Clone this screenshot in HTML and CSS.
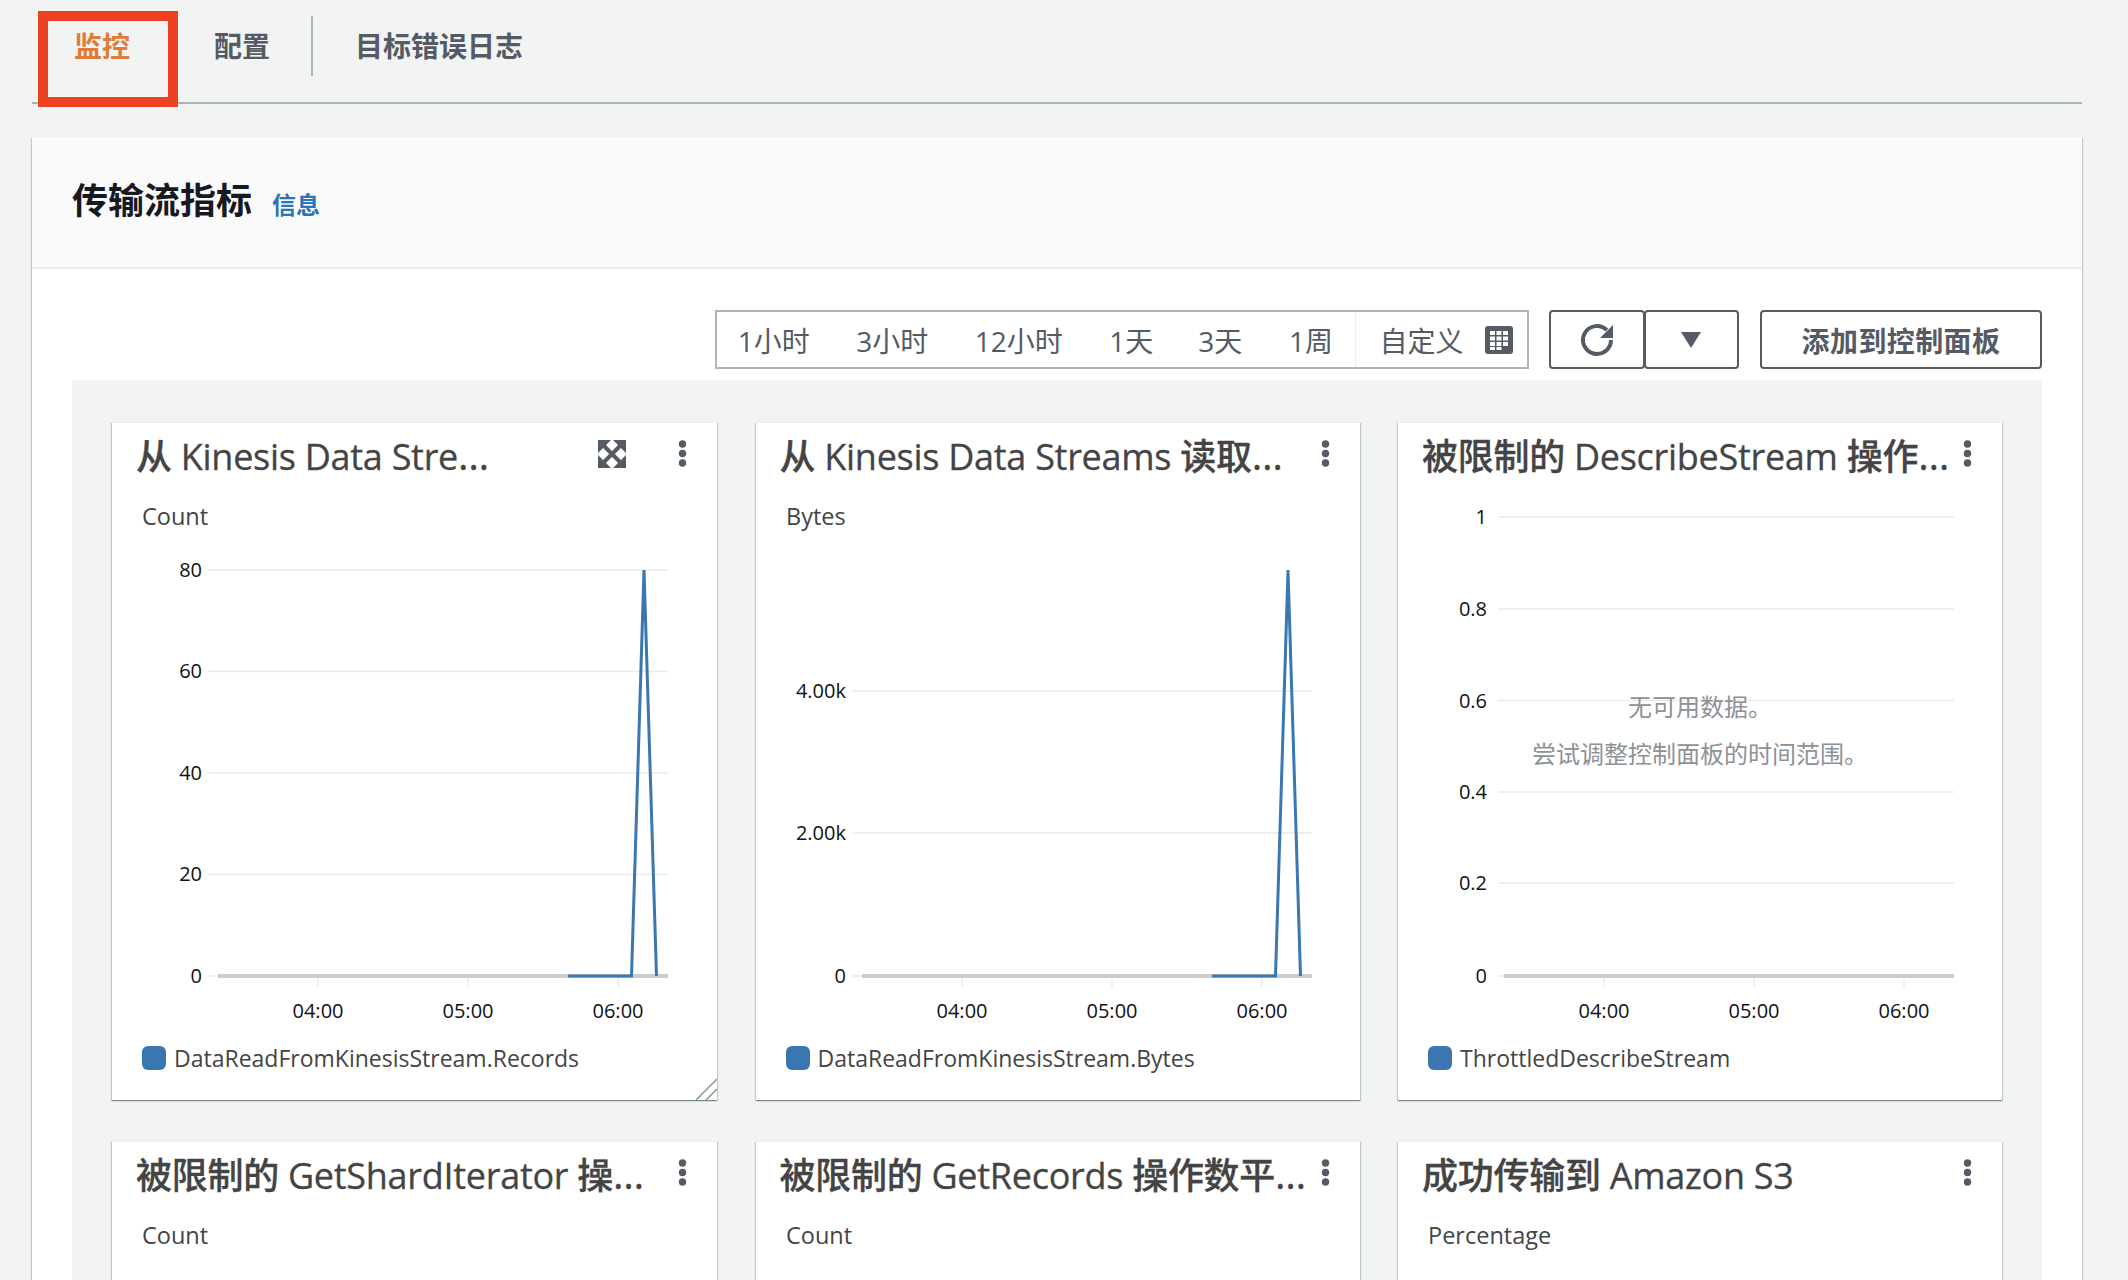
FILE: index.html
```html
<!DOCTYPE html>
<html lang="zh-CN">
<head>
<meta charset="utf-8">
<title>传输流指标</title>
<link rel="stylesheet" href="styles.css">
</head>
<body>
<div class="page">
  <nav class="tabs">
    <a class="tab tab-active">监控</a>
    <a class="tab tab-sep-after">配置</a>
    <a class="tab">目标错误日志</a>
    <span class="highlight"></span>
  </nav>

  <section class="panel">
    <header class="panel-head">
      <h2 class="panel-title">传输流指标</h2>
      <a class="info">信息</a>
    </header>
    <div class="panel-body">
      <div class="toolbar">
        <div class="range">
          <span class="range-item range-first">1小时</span>
          <span class="range-item range-loose">3小时</span>
          <span class="range-item range-wide">12小时</span>
          <span class="range-item">1天</span>
          <span class="range-item range-loose">3天</span>
          <span class="range-item">1周</span>
          <span class="range-custom">自定义
            <svg class="cal" width="28" height="28" viewBox="0 0 28 28"><rect width="28" height="28" rx="3" fill="#545b64"/><g fill="#fff"><rect x="5" y="5" width="5" height="4"/><rect x="11.5" y="5" width="5" height="4"/><rect x="18" y="5" width="5" height="4"/><rect x="5" y="10.5" width="5" height="4"/><rect x="11.5" y="10.5" width="5" height="4"/><rect x="18" y="10.5" width="5" height="4"/><rect x="5" y="16" width="5" height="4"/><rect x="11.5" y="16" width="5" height="4"/><rect x="18" y="16" width="5" height="4"/><rect x="5" y="21" width="5" height="3"/><rect x="11.5" y="21" width="5" height="3"/></g></svg>
          </span>
        </div>
        <div class="btn-pair">
          <button class="btn btn-icon btn-left"><svg width="36" height="36" viewBox="0 0 36 36"><path d="M27.900 8.100A14 14 0 1 0 32 18" fill="none" stroke="#545b64" stroke-width="4"/><path d="M34 3V16H21z" fill="#545b64"/></svg></button>
          <button class="btn btn-icon btn-right"><svg width="20" height="16" viewBox="0 0 20 16"><path d="M0 0h20L10 16z" fill="#545b64"/></svg></button>
        </div>
        <button class="btn btn-add">添加到控制面板</button>
      </div>

      <div class="board">
        <article class="card">
          <div class="card-head">
            <h3 class="card-title">从 Kinesis Data Stre<span class="ell">…</span></h3>
            <svg class="expand" width="28" height="28" viewBox="0 0 28 28"><path d="M0 0h13L0 13zM28 0v13L15 0zM0 28V15l13 13zM28 28H15l13-13z" fill="#545b64"/><path d="M2 2l24 24M26 2L2 26" stroke="#545b64" stroke-width="4"/></svg>
            <svg class="kebab" width="9" height="27" viewBox="0 0 9 27"><circle cx="4.5" cy="4" r="3.7"/><circle cx="4.5" cy="13.5" r="3.7"/><circle cx="4.5" cy="23" r="3.7"/></svg>
          </div>
          <svg class="chart" width="604" height="540" viewBox="0 0 604 540">
            <text class="unit" x="30" y="33">Count</text>
            <g class="grid"><path d="M96 78H556M96 179.500H556M96 281H556M96 382.500H556M96 484H106"/><path d="M206 486V495M356 486V495M506 486V495"/></g>
            <path class="axis" d="M106 484H556"/>
            <g class="ylab"><text x="90" y="85">80</text><text x="90" y="186">60</text><text x="90" y="288">40</text><text x="90" y="389">20</text><text x="90" y="491">0</text></g>
            <g class="xlab"><text x="206" y="526">04:00</text><text x="356" y="526">05:00</text><text x="506" y="526">06:00</text></g>
            <path class="series" d="M456 484H519.500L532 78L544.500 484"/>
          </svg>
          <div class="legend"><span class="swatch"></span>DataReadFromKinesisStream.Records</div>
          <svg class="resize" width="22" height="22" viewBox="0 0 22 22"><path d="M1 22L22 1M11 22L22 11" stroke="#879596" stroke-width="1.500" fill="none"/></svg>
        </article>

        <article class="card">
          <div class="card-head">
            <h3 class="card-title">从 Kinesis Data Streams 读取<span class="ell">…</span></h3>
            <svg class="kebab" width="9" height="27" viewBox="0 0 9 27"><circle cx="4.5" cy="4" r="3.7"/><circle cx="4.5" cy="13.5" r="3.7"/><circle cx="4.5" cy="23" r="3.7"/></svg>
          </div>
          <svg class="chart" width="604" height="540" viewBox="0 0 604 540">
            <text class="unit" x="30" y="33">Bytes</text>
            <g class="grid"><path d="M96 199H556M96 341H556M96 484H106"/><path d="M206 486V495M356 486V495M506 486V495"/></g>
            <path class="axis" d="M106 484H556"/>
            <g class="ylab"><text x="90" y="206">4.00k</text><text x="90" y="348">2.00k</text><text x="90" y="491">0</text></g>
            <g class="xlab"><text x="206" y="526">04:00</text><text x="356" y="526">05:00</text><text x="506" y="526">06:00</text></g>
            <path class="series" d="M456 484H519.500L532 78L544.500 484"/>
          </svg>
          <div class="legend"><span class="swatch"></span>DataReadFromKinesisStream.Bytes</div>
        </article>

        <article class="card">
          <div class="card-head">
            <h3 class="card-title">被限制的 DescribeStream 操作<span class="ell">…</span></h3>
            <svg class="kebab" width="9" height="27" viewBox="0 0 9 27"><circle cx="4.5" cy="4" r="3.7"/><circle cx="4.5" cy="13.5" r="3.7"/><circle cx="4.5" cy="23" r="3.7"/></svg>
          </div>
          <svg class="chart" width="604" height="540" viewBox="0 0 604 540">
            <g class="grid"><path d="M100 25H556M100 117H556M100 208.500H556M100 300H556M100 391H556M100 484H106"/><path d="M206 486V495M356 486V495M506 486V495"/></g>
            <path class="axis" d="M106 484H556"/>
            <g class="ylab"><text x="89" y="32">1</text><text x="89" y="124">0.8</text><text x="89" y="216">0.6</text><text x="89" y="307">0.4</text><text x="89" y="398">0.2</text><text x="89" y="491">0</text></g>
            <g class="xlab"><text x="206" y="526">04:00</text><text x="356" y="526">05:00</text><text x="506" y="526">06:00</text></g>
            <g class="nodata"><text x="302" y="224">无可用数据。</text><text x="302" y="271">尝试调整控制面板的时间范围。</text></g>
          </svg>
          <div class="legend"><span class="swatch"></span>ThrottledDescribeStream</div>
        </article>

        <article class="card">
          <div class="card-head">
            <h3 class="card-title">被限制的 GetShardIterator 操<span class="ell">…</span></h3>
            <svg class="kebab" width="9" height="27" viewBox="0 0 9 27"><circle cx="4.5" cy="4" r="3.7"/><circle cx="4.5" cy="13.5" r="3.7"/><circle cx="4.5" cy="23" r="3.7"/></svg>
          </div>
          <svg class="chart" width="604" height="100" viewBox="0 0 604 100"><text class="unit" x="30" y="33">Count</text></svg>
        </article>

        <article class="card">
          <div class="card-head">
            <h3 class="card-title">被限制的 GetRecords 操作数平<span class="ell">…</span></h3>
            <svg class="kebab" width="9" height="27" viewBox="0 0 9 27"><circle cx="4.5" cy="4" r="3.7"/><circle cx="4.5" cy="13.5" r="3.7"/><circle cx="4.5" cy="23" r="3.7"/></svg>
          </div>
          <svg class="chart" width="604" height="100" viewBox="0 0 604 100"><text class="unit" x="30" y="33">Count</text></svg>
        </article>

        <article class="card">
          <div class="card-head">
            <h3 class="card-title">成功传输到 Amazon S3</h3>
            <svg class="kebab" width="9" height="27" viewBox="0 0 9 27"><circle cx="4.5" cy="4" r="3.7"/><circle cx="4.5" cy="13.5" r="3.7"/><circle cx="4.5" cy="23" r="3.7"/></svg>
          </div>
          <svg class="chart" width="604" height="100" viewBox="0 0 604 100"><text class="unit" x="30" y="33">Percentage</text></svg>
        </article>
      </div>
    </div>
  </section>
</div>
</body>
</html>
```

FILE: styles.css
```css
* { box-sizing: border-box; }
html, body {
  margin: 0;
  height: 1280px;
  overflow: hidden;
  background: #f2f3f3;
  font-family: "Open Sans", "Noto Sans CJK SC", sans-serif;
}
.page {
  padding: 0 46px 0 32px;
}

/* tabs */
.tabs {
  position: relative;
  display: flex;
  height: 104px;
  padding: 16px 0 0 0;
  border-bottom: 2px solid #aab7b8;
}
.tab {
  height: 60px;
  padding: 11px 42px 0;
  font-size: 28px;
  line-height: 38px;
  font-weight: 700;
  color: #545b64;
}
.tab-sep-after {
  padding-right: 41px;
  border-right: 2px solid #aab7b8;
}
.tab-active { color: #e07b39; }
.highlight {
  position: absolute;
  left: 6px;
  top: 11px;
  width: 140px;
  height: 96px;
  border: solid #ee4023;
  border-width: 10px;
}

/* panel */
.panel {
  margin-top: 33px;
  background: #fff;
  box-shadow: 0 1px 1px 0 rgba(0,28,36,.3), 1px 1px 1px 0 rgba(0,28,36,.15), -1px 1px 1px 0 rgba(0,28,36,.15);
}
.panel-head {
  display: flex;
  align-items: center;
  gap: 20px;
  height: 132px;
  padding: 0 40px 8px;
  background: #fafafa;
  border-bottom: 2px solid #eaeded;
}
.panel-title {
  margin: 0;
  font-size: 36px;
  font-weight: 700;
  color: #16191f;
}
.info {
  padding-top: 10px;
  font-size: 24px;
  font-weight: 700;
  color: #2a73b8;
}
.panel-body {
  padding: 41px 40px 0;
}

/* toolbar */
.toolbar {
  display: flex;
  justify-content: flex-end;
  gap: 21px;
  height: 59px;
  margin-bottom: 11px;
}
.range {
  display: flex;
  align-items: center;
  margin-right: -1px;
  border: 2px solid #aab7b8;
  background: #fff;
  font-size: 28px;
  color: #545b64;
}
.range-item {
  padding: 0 22.500px;
  white-space: nowrap;
}
.range-first { padding: 0 24px 0 21px; }
.range-loose { padding-right: 24px; }
.range-wide { padding-right: 24px; }
.range-custom {
  display: flex;
  align-items: center;
  gap: 22px;
  height: 100%;
  padding: 0 13.600px 0 23px;
  border-left: 1px solid #eaeded;
  white-space: nowrap;
}
.btn-pair { display: flex; }
.btn {
  height: 59px;
  background: #fff;
  border: 2px solid #545b64;
  border-radius: 4px;
  color: #545b64;
  font-family: inherit;
  font-size: 28px;
  font-weight: 700;
  padding: 0;
}
.btn-icon {
  display: flex;
  align-items: center;
  justify-content: center;
  width: 95.500px;
}
.btn-right { margin-left: -1px; }
.btn-add { width: 282px; letter-spacing: 0.4px; }

/* board */
.board {
  display: grid;
  grid-template-columns: 605px 604px 604px;
  grid-auto-rows: 678px;
  gap: 41px 38.500px;
  padding: 42px 40px 0;
  background: #f2f3f3;
}
.card {
  position: relative;
  background: #fff;
  border-top: 1px solid #eaeded;
  box-shadow: 0 1px 1px 0 rgba(0,28,36,.3), 1px 1px 1px 0 rgba(0,28,36,.15), -1px 1px 1px 0 rgba(0,28,36,.15);
}
.card-head {
  display: flex;
  align-items: flex-start;
  height: 69px;
  padding: 10px 30px 0 24px;
}
.card-title {
  flex: 1;
  margin: 0;
  font-size: 36px;
  line-height: 48px;
  font-weight: 500;
  letter-spacing: -0.280px;
  color: #444;
  -webkit-text-stroke: 0.3px #444;
  white-space: nowrap;
}
.ell { font-size: 40px; line-height: 1; }
.expand { margin: 7px 52px 0 0; flex: none; }
.kebab { margin-top: 7px; flex: none; fill: #545b64; }
.chart {
  display: block;
  font-family: "Open Sans", "Noto Sans CJK SC", sans-serif;
}
.unit { font-size: 23.500px; fill: #444; }
.grid path { stroke: #eaeaea; stroke-width: 1.5; fill: none; }
.axis { stroke: #ccc; stroke-width: 4; fill: none; }
.series { stroke: #3a76b0; stroke-width: 3; fill: none; }
.ylab text { font-size: 20px; fill: #111; text-anchor: end; }
.xlab text { font-size: 20px; fill: #111; text-anchor: middle; }
.nodata text { font-size: 24px; fill: #8d9296; text-anchor: middle; }
.legend {
  display: flex;
  align-items: center;
  gap: 8px;
  height: 48px;
  padding: 4px 0 0 30px;
  font-size: 23px;
  color: #444;
}
.swatch {
  width: 24px;
  height: 24px;
  border-radius: 6px;
  background: #3a76b0;
}
.resize {
  position: absolute;
  right: 0;
  bottom: 0;
}
```
